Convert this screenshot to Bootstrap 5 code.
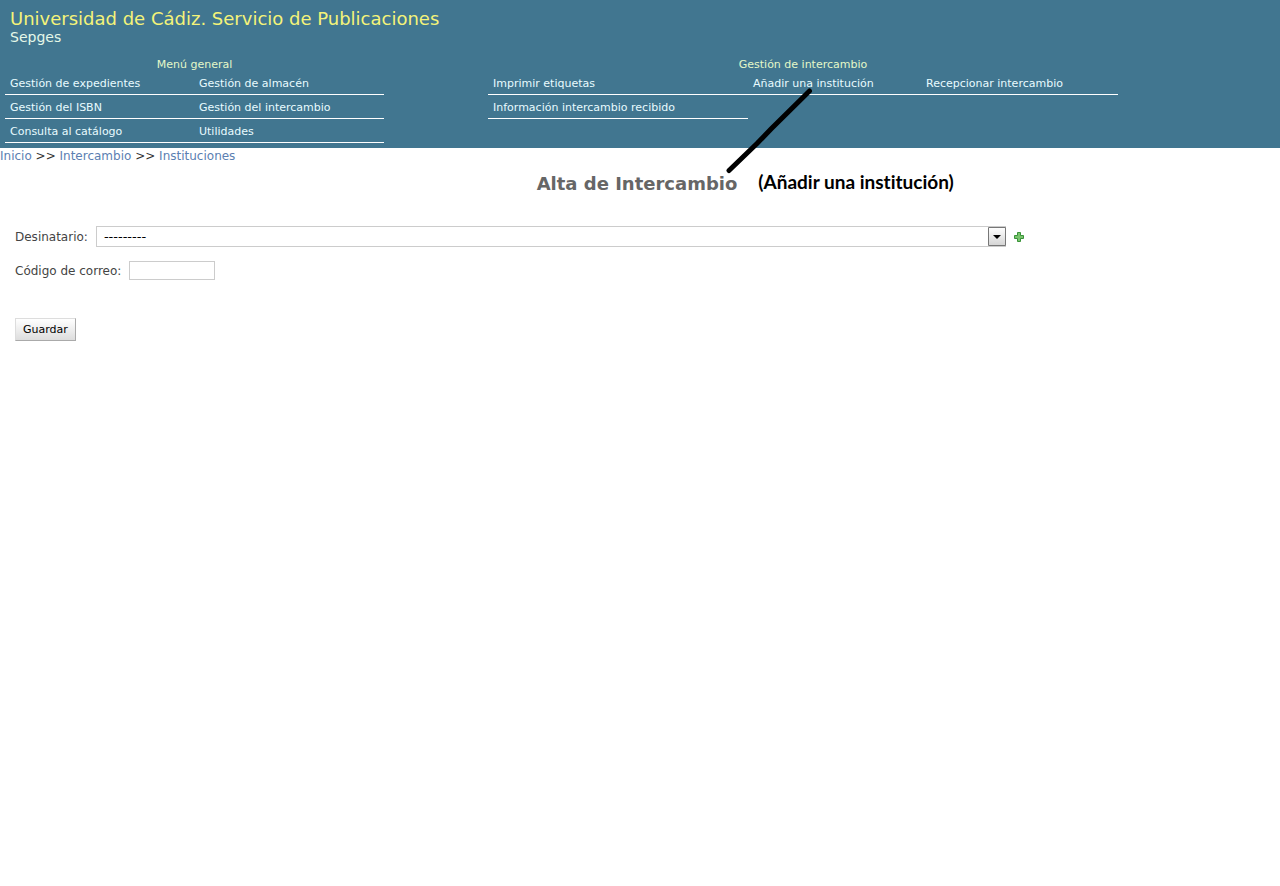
<!DOCTYPE html>
<html lang="es">
<head>
<meta charset="utf-8">
<meta name="viewport" content="width=device-width, initial-scale=1">
<title>Sepges - Alta de Intercambio</title>
<link href="https://cdn.jsdelivr.net/npm/bootstrap@5.3.0/dist/css/bootstrap.min.css" rel="stylesheet">
<style>
body { font: 12px/16px "DejaVu Sans", Verdana, sans-serif; color: #444; background: #fff; }
a { text-decoration: none; }
.site-head { background: #417690; padding: 9px 0 5px; }
.site-brand { padding: 0 10px; }
.site-name { font-size: 18px; line-height: 20px; color: #f4f379; }
.site-sub { font-size: 14px; line-height: 16px; color: #e4f8e8; }
.menus { display: grid; grid-template-columns: 379fr 104fr 630fr 162fr; margin: 14px 0 0 5px; font-size: 11px; color: #e4f8c8; }
.menu-related { grid-column: 3; }
.menu-title { font-size: 11px; line-height: 12px; }
.menu-grid { display: grid; line-height: 15px; }
.menu-general .menu-grid { grid-template-columns: 189fr 190fr; }
.menu-related .menu-grid { grid-template-columns: 260fr 173fr 197fr; }
.menu-grid li { padding: 5px 5px 3px; border-bottom: 1px solid #fff; }
.menu-grid a { color: #e8fbff; }
.crumbs { color: #333; }
.crumbs a { color: #5b80b2; }
.page-title { font-size: 18px; line-height: 24px; color: #666; padding-right: 6px; }
.note { position: absolute; left: 100%; top: 0; margin-left: 21px; font: 700 19px/20px Lato, sans-serif; font-variant-ligatures: none; color: #000; white-space: nowrap; }
.note-line { position: absolute; right: 0; bottom: 0; margin: 0 -77px 20px 0; pointer-events: none; }
.entry { padding: 30px 15px 0; }
.field-row { gap: 8px; }
.code-row { margin-top: 14px; }
.pick { width: 910px; max-width: 85%; }
.pick .form-select, .field-row .form-control, .save { border-radius: 0; font-size: 11px; line-height: 15px; color: #000; }
.pick .form-select { height: 21px; padding: 2px 24px 2px 7px; border: 1px solid #ccc; background: #fff; font-size: 13px; }
.pick-arrow { position: absolute; right: 0; top: 0; pointer-events: none; }
.field-row .form-control { width: 86px; height: 19px; padding: 1px 4px; border: 1px solid #ccc; }
.save { margin-top: 38px; padding: 3px 7px; border: 1px solid; border-color: #ddd #aaa #aaa #ddd; background: linear-gradient(#fff, #ddd); }
</style>
</head>
<body>
<header class="site-head">
  <div class="site-brand">
    <div class="site-name">Universidad de Cádiz. Servicio de Publicaciones</div>
    <div class="site-sub">Sepges</div>
  </div>
  <div class="menus">
    <nav class="menu-general" aria-labelledby="m1">
      <h2 class="menu-title text-center fw-normal m-0" id="m1">Menú general</h2>
      <ul class="menu-grid list-unstyled m-0">
        <li><a href="#">Gestión de expedientes</a></li>
        <li><a href="#">Gestión de almacén</a></li>
        <li><a href="#">Gestión del ISBN</a></li>
        <li><a href="#">Gestión del intercambio</a></li>
        <li><a href="#">Consulta al catálogo</a></li>
        <li><a href="#">Utilidades</a></li>
      </ul>
    </nav>
    <nav class="menu-related" aria-labelledby="m2">
      <h2 class="menu-title text-center fw-normal m-0" id="m2">Gestión de intercambio</h2>
      <ul class="menu-grid list-unstyled m-0">
        <li><a href="#">Imprimir etiquetas</a></li>
        <li><a href="#">Añadir una institución</a></li>
        <li><a href="#">Recepcionar intercambio</a></li>
        <li><a href="#">Información intercambio recibido</a></li>
      </ul>
    </nav>
  </div>
</header>
<nav class="crumbs" aria-label="Ruta"><a href="#">Inicio</a> &gt;&gt; <a href="#">Intercambio</a> &gt;&gt; <a href="#">Instituciones</a></nav>
<main>
  <h1 class="page-title text-center fw-bold mt-2 mb-0"><span class="position-relative d-inline-block">Alta de Intercambio
    <svg class="note-line" width="90" height="90" viewBox="0 0 90 90" aria-hidden="true"><path d="M5 84.500L33 57.500L47 43L85.500 5" fill="none" stroke="#000" stroke-width="5" stroke-linecap="round"/></svg>
    <span class="note">(Añadir una institución)</span></span></h1>
  <form class="entry">
    <div class="field-row d-flex align-items-center">
      <label for="dest">Desinatario:</label>
      <div class="pick position-relative">
        <select class="form-select" id="dest"><option>---------</option></select>
        <svg class="pick-arrow" width="18" height="21" viewBox="0 0 18 21" aria-hidden="true"><defs><linearGradient id="g" x2="0" y2="1"><stop stop-color="#fff"/><stop offset="1" stop-color="#d4d4d4"/></linearGradient></defs><path d="M.5 1.500h17v18H.5z" fill="url(#g)" stroke="#777"/><path d="M5 9h8l-4 4z"/></svg>
      </div>
      <a class="d-flex" href="#" aria-label="Añadir otro"><svg width="10" height="10" viewBox="0 0 10 10"><path d="M3.500.5h3v3h3v3h-3v3h-3v-3h-3v-3h3z" fill="#79c46d" stroke="#399339"/></svg></a>
    </div>
    <div class="field-row code-row d-flex align-items-center">
      <label for="code">Código de correo:</label>
      <input class="form-control" type="text" id="code">
    </div>
    <button class="save" type="submit">Guardar</button>
  </form>
</main>
<script src="https://cdn.jsdelivr.net/npm/bootstrap@5.3.0/dist/js/bootstrap.bundle.min.js"></script>
</body>
</html>
